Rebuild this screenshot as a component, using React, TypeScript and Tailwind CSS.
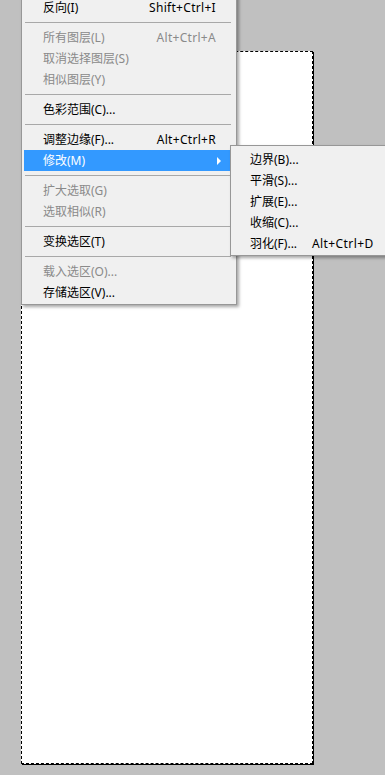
import { Fragment } from 'react'

type Item =
  | { sep: true }
  | { sep?: false; label: string; shortcut?: string; disabled?: boolean; active?: boolean; sub?: boolean }

const mainItems: Item[] = [
  { label: '反向(I)', shortcut: 'Shift+Ctrl+I' },
  { sep: true },
  { label: '所有图层(L)', shortcut: 'Alt+Ctrl+A', disabled: true },
  { label: '取消选择图层(S)', disabled: true },
  { label: '相似图层(Y)', disabled: true },
  { sep: true },
  { label: '色彩范围(C)...' },
  { sep: true },
  { label: '调整边缘(F)...', shortcut: 'Alt+Ctrl+R' },
  { label: '修改(M)', active: true, sub: true },
  { sep: true },
  { label: '扩大选取(G)', disabled: true },
  { label: '选取相似(R)', disabled: true },
  { sep: true },
  { label: '变换选区(T)' },
  { sep: true },
  { label: '载入选区(O)...', disabled: true },
  { label: '存储选区(V)...' },
]

const subItems = [
  { label: '边界(B)...' },
  { label: '平滑(S)...' },
  { label: '扩展(E)...' },
  { label: '收缩(C)...' },
  { label: '羽化(F)...', shortcut: 'Alt+Ctrl+D' },
]

const font = { fontFamily: '"Noto Sans", "Noto Sans CJK SC", sans-serif' }

function MenuRow({ item }: { item: Item }) {
  if (item.sep) {
    return (
      <div className="h-[9px] pt-[4px] pl-[3px] pr-[5px]">
        <div className="h-px bg-[#a8a8a8]" />
      </div>
    )
  }
  const color = item.active ? 'text-white' : item.disabled ? 'text-[#8a8a8a]' : 'text-black'
  return (
    <div
      className={`mx-[2px] flex h-[21px] items-center pl-[19px] pr-[18px] ${color} ${
        item.active ? 'bg-[#3399ff]' : ''
      }`}
    >
      <span className="flex-1 whitespace-nowrap">{item.label}</span>
      {item.shortcut ? (
        <span className="whitespace-nowrap tracking-[0.3px]">{item.shortcut}</span>
      ) : null}
      {item.sub ? (
        <span className="mr-[-5px] h-0 w-0 border-y-[4px] border-l-[4px] border-y-transparent border-l-white" />
      ) : null}
    </div>
  )
}

export default function App() {
  return (
    <div
      className="relative h-[775px] w-[385px] overflow-hidden bg-[#c0c0c0] text-[12px] leading-none"
      style={font}
    >
      <div className="ml-[21px] pt-[51px]">
        <div className="h-[713px] w-[292px] border border-dashed border-black bg-white shadow-[1px_1px_0_#000]" />
      </div>

      <div className="absolute left-[21px] top-[-6px] w-[216px] border border-[#979797] bg-[#f0f0f0] pt-[2px] pb-[1px] shadow-[2px_2px_3px_rgba(0,0,0,0.35)]">
        {mainItems.map((item, i) => (
          <Fragment key={i}>
            <MenuRow item={item} />
          </Fragment>
        ))}
      </div>

      <div className="absolute left-[230px] top-[145px] w-[170px] border border-[#979797] bg-[#f0f0f0] pt-[3px] pb-[1px] shadow-[2px_2px_3px_rgba(0,0,0,0.35)]">
        {subItems.map((item) => (
          <div key={item.label} className="flex h-[21px] items-center pl-[19px] text-black">
            <span className="w-[62px] whitespace-nowrap">{item.label}</span>
            {item.shortcut ? (
              <span className="whitespace-nowrap tracking-[0.4px]">{item.shortcut}</span>
            ) : null}
          </div>
        ))}
      </div>
    </div>
  )
}
